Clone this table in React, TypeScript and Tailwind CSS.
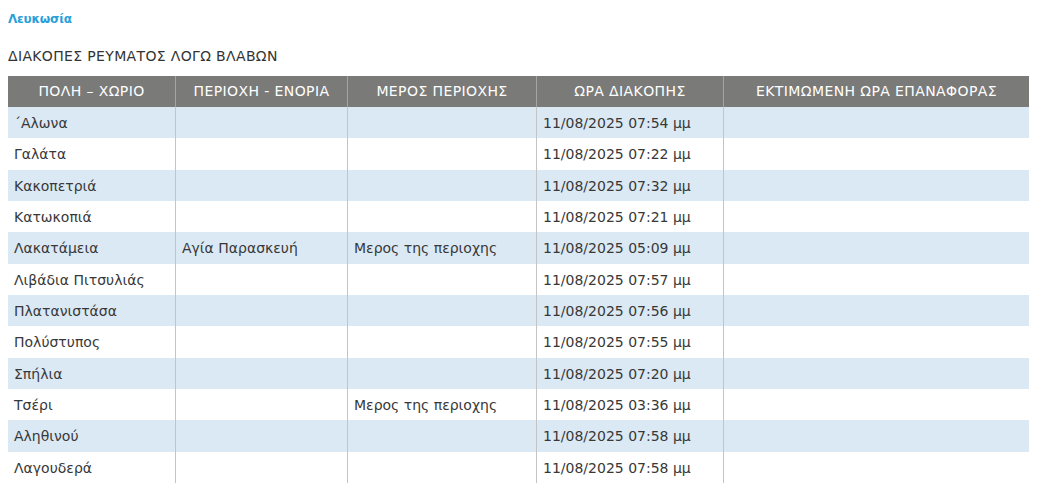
import React from "react";

const rows: [string, string, string, string][] = [
  ["\u0384Αλωνα", "", "", "11/08/2025 07:54 μμ"],
  ["Γαλάτα", "", "", "11/08/2025 07:22 μμ"],
  ["Κακοπετριά", "", "", "11/08/2025 07:32 μμ"],
  ["Κατωκοπιά", "", "", "11/08/2025 07:21 μμ"],
  ["Λακατάμεια", "Αγία Παρασκευή", "Μερος της περιοχης", "11/08/2025 05:09 μμ"],
  ["Λιβάδια Πιτσυλιάς", "", "", "11/08/2025 07:57 μμ"],
  ["Πλατανιστάσα", "", "", "11/08/2025 07:56 μμ"],
  ["Πολύστυπος", "", "", "11/08/2025 07:55 μμ"],
  ["Σπήλια", "", "", "11/08/2025 07:20 μμ"],
  ["Τσέρι", "", "Μερος της περιοχης", "11/08/2025 03:36 μμ"],
  ["Αληθινού", "", "", "11/08/2025 07:58 μμ"],
  ["Λαγουδερά", "", "", "11/08/2025 07:58 μμ"],
];

const headers = [
  "ΠΟΛΗ – ΧΩΡΙΟ",
  "ΠΕΡΙΟΧΗ - ΕΝΟΡΙΑ",
  "ΜΕΡΟΣ ΠΕΡΙΟΧΗΣ",
  "ΩΡΑ ΔΙΑΚΟΠΗΣ",
  "ΕΚΤΙΜΩΜΕΝΗ ΩΡΑ ΕΠΑΝΑΦΟΡΑΣ",
];

export default function App() {
  return (
    <div
      className="w-[1046px] h-[496px] bg-white px-2 pt-[10px] overflow-hidden"
      style={{ fontFamily: '"DejaVu Sans", sans-serif' }}
    >
      <div className="text-[12px] font-bold text-[#2a9fd8] leading-[18px] tracking-[-0.2px]">Λευκωσία</div>
      <div className="mt-[19px] text-[14px] text-[#333] leading-[18px] tracking-[0.35px]">ΔΙΑΚΟΠΕΣ ΡΕΥΜΑΤΟΣ ΛΟΓΩ ΒΛΑΒΩΝ</div>
      <div className="mt-[11px] w-[1021px]">
        <div className="grid grid-cols-[167px_172px_189px_187px_306px] h-[31px] bg-[#7a7a78] text-white text-[14px] tracking-[0.4px]">
          {headers.map((h, i) => (
            <div
              key={i}
              className={`flex items-center justify-center whitespace-nowrap ${i > 0 ? "border-l border-[#a4a4a2]" : ""}`}
            >
              {h}
            </div>
          ))}
        </div>
        {rows.map((r, ri) => (
          <div
            key={ri}
            className={`grid grid-cols-[167px_172px_189px_187px_306px] h-[31.33px] text-[14px] text-[#383838] ${
              ri % 2 === 0 ? "bg-[#dbe9f4]" : "bg-white"
            }`}
          >
            {[...r, ""].map((c, ci) => (
              <div
                key={ci}
                className={`flex items-center pl-[6px] pt-[2px] whitespace-nowrap ${ci > 0 ? "border-l border-[#c4c4c4]" : ""}`}
              >
                {c}
              </div>
            ))}
          </div>
        ))}
      </div>
    </div>
  );
}
